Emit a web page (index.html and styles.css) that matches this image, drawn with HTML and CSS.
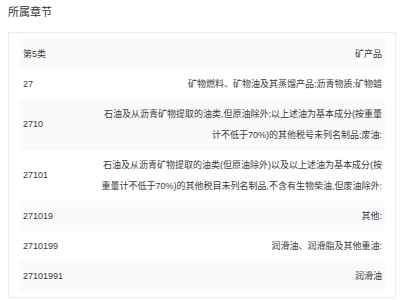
FILE: index.html
```html
<!DOCTYPE html>
<html lang="zh-CN">
<head>
<meta charset="utf-8">
<title>所属章节</title>
<link rel="stylesheet" href="styles.css">
</head>
<body>
<div class="section">
  <h2 class="section-title">所属章节</h2>
  <div class="card">
    <table class="chapters">
      <tbody>
        <tr><td class="code">第5类</td><td class="desc">矿产品</td></tr>
        <tr><td class="code">27</td><td class="desc">矿物燃料、矿物油及其蒸馏产品;沥青物质;矿物蜡</td></tr>
        <tr><td class="code">2710</td><td class="desc">石油及从沥青矿物提取的油类,但原油除外;以上述油为基本成分(按重量计不低于70%)的其他税号未列名制品;废油:</td></tr>
        <tr><td class="code">27101</td><td class="desc">石油及从沥青矿物提取的油类(但原油除外)以及以上述油为基本成分(按重量计不低于70%)的其他税目未列名制品,不含有生物柴油,但废油除外:</td></tr>
        <tr><td class="code">271019</td><td class="desc">其他:</td></tr>
        <tr><td class="code">2710199</td><td class="desc">润滑油、润滑脂及其他重油:</td></tr>
        <tr><td class="code">27101991</td><td class="desc">润滑油</td></tr>
      </tbody>
    </table>
  </div>
</div>
</body>
</html>
```
FILE: styles.css
```css
html, body {
  background: #ffffff;
}
body {
  margin: 0 8px;
  font-family: "Liberation Sans", "Noto Sans CJK SC", sans-serif;
  color: #333333;
}
.section-title {
  margin: 0;
  font-size: 11px;
  font-weight: normal;
  line-height: 24px;
  color: #333333;
}
.card {
  margin-top: 8px;
  border: 1px solid #ececec;
  padding: 6px 10px 6px 11px;
}
.chapters {
  width: 100%;
  border-collapse: collapse;
  table-layout: fixed;
  font-size: 9px;
  line-height: 21px;
  color: #3a3a3a;
}
.chapters tr:nth-child(odd) {
  background: #fafafa;
}
.chapters td {
  padding: 4.5px 3px;
  vertical-align: middle;
}
.chapters .code {
  width: 71px;
  text-align: left;
}
.chapters .desc {
  text-align: right;
}
```
